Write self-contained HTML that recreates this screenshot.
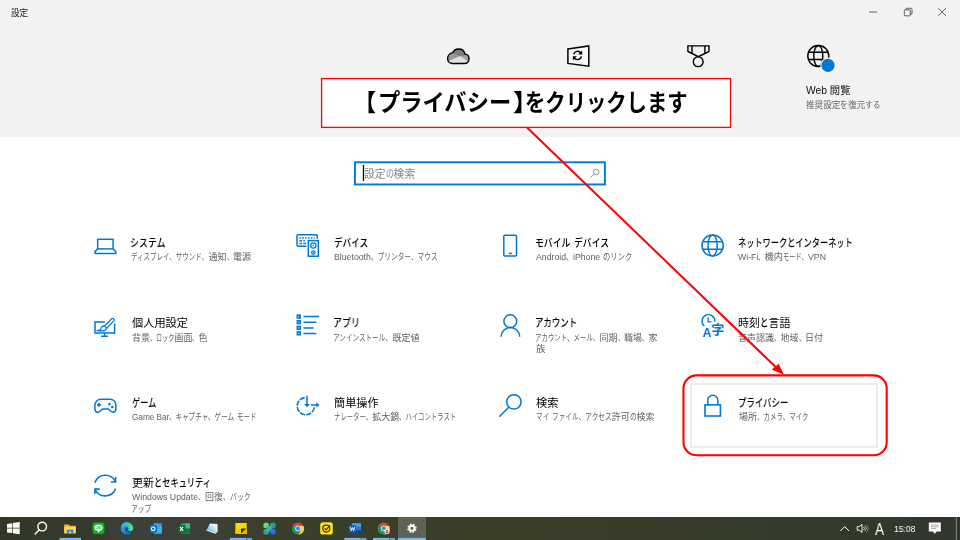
<!DOCTYPE html>
<html lang="ja">
<head>
<meta charset="utf-8">
<title>設定</title>
<style>
html,body{margin:0;padding:0}
body{width:960px;height:540px;overflow:hidden;background:#fff;position:relative;font-family:"Liberation Sans","Noto Sans CJK JP",sans-serif}
.abs{position:absolute}
.hdr{position:absolute;left:0;top:0;width:960px;height:137px;background:#f2f2f2}
.t{position:absolute;white-space:pre;will-change:transform}
.t span{position:absolute;top:0;transform-origin:0 0;white-space:pre}
svg{position:absolute;overflow:visible}
.taskbar{position:absolute;left:0;top:517px;width:960px;height:23px;background:linear-gradient(90deg,#323826 0,#353a2b 9%,#3c4038 14%,#3c4039 21%,#3a3e2c 27%,#393e29 55%,#353b2a 80%,#30362a 100%)}
</style>
</head>
<body>
<div class="hdr"></div>
<svg class="abs" style="left:0;top:0" width="960" height="540" viewBox="0 0 960 540">
 <rect x="321.6" y="78.6" width="408.9" height="48.8" fill="#fff" stroke="#f00" stroke-width="1.3"/>
 <rect x="354.95" y="162.3" width="249.95" height="22.15" fill="#fff" stroke="#0078d7" stroke-width="1.9"/>
 <rect x="690.85" y="383.95" width="186.1" height="63" fill="#fff" stroke="#e9e9e9" stroke-width="1.7"/>
</svg>
<svg class="abs" style="left:0;top:0" width="960" height="540" viewBox="0 0 960 540" fill="none" stroke-linecap="butt">
<!-- window controls -->
<g stroke="#2a2a2a" stroke-width="0.7">
 <line x1="869" y1="12.05" x2="877.2" y2="12.05"/>
 <rect x="904.3" y="9.8" width="6" height="6" rx="0.8"/>
 <path d="M906 9.8 V8.9 Q906 8.3 906.7 8.3 H911.3 Q912 8.3 912 9 V13.6 Q912 14.2 911.3 14.2 H910.3"/>
 <path d="M938.2 8.1 L946 15.9 M946 8.1 L938.2 15.9"/>
</g>
<!-- header: cloud -->
<defs>
 <clipPath id="cc"><path d="M452.6 63.5 C449.5 63.5 447.6 61.1 447.6 58.4 C447.6 55.4 449.8 53.2 452.5 52.9 C453.7 50.5 455.9 49 458.6 49 C461.9 49 464.2 51.1 465 53.9 C467.4 54.3 469 56.2 469 58.7 C469 61.5 467 63.5 464.4 63.5 Z"/></clipPath>
</defs>
<g clip-path="url(#cc)" stroke="none">
 <rect x="446" y="48" width="25" height="17" fill="#a3a3a3"/>
 <path d="M446 48 H471 V54 L459 57 L450 52 Z" fill="#7d7d7d"/>
 <path d="M446 52 L450 51.5 L460 56.2 L449 61 L446 62 Z" fill="#999"/>
 <path d="M448 61.5 L460 56 L468 61.5 L468 65 L448 65 Z" fill="#e2e2e2"/>
</g>
<path d="M452.6 63.5 C449.5 63.5 447.6 61.1 447.6 58.4 C447.6 55.4 449.8 53.2 452.5 52.9 C453.7 50.5 455.9 49 458.6 49 C461.9 49 464.2 51.1 465 53.9 C467.4 54.3 469 56.2 469 58.7 C469 61.5 467 63.5 464.4 63.5 Z" stroke="#000" stroke-width="1.4"/>
<!-- header: sync -->
<path d="M567.9 48.9 L588.8 45.9 V66.2 L567.9 63.4 Z" fill="#f9f9f9" stroke="#000" stroke-width="1.5" stroke-linejoin="miter"/>
<g stroke="#000" stroke-width="1.4">
 <path d="M573.7 54.4 A4 4 0 0 1 581 53.2"/>
 <path d="M581.4 56.3 A4 4 0 0 1 574 57.6"/>
</g>
<path d="M582.2 50.6 V54.6 H578.2 Z M572.8 60.2 V56.2 H576.8 Z" fill="#000" stroke="none"/>
<!-- header: medal -->
<g stroke="#000" stroke-width="1.4" stroke-linejoin="miter">
 <path d="M687.9 45.9 H709 V51.5 L698.4 56.6 L687.9 51.5 Z"/>
 <path d="M692 45.9 V53.2 M704.9 45.9 V53.2"/>
 <circle cx="698.2" cy="61.7" r="4.9"/>
</g>
<!-- header: globe -->
<g stroke="#000" stroke-width="1.4">
 <circle cx="818.3" cy="56" r="10.5"/>
 <ellipse cx="818.3" cy="56" rx="4.5" ry="10.5"/>
 <path d="M808.7 52.3 H828 M808.7 59.5 H828"/>
</g>
<circle cx="828" cy="65.4" r="7.8" fill="#f2f2f2" stroke="none"/>
<circle cx="828" cy="65.4" r="6.6" fill="#0078d7" stroke="none"/>
<!-- search magnifier -->
<g stroke="#7a7a7a" stroke-width="0.8">
 <circle cx="596.2" cy="172" r="2.8"/>
 <path d="M594.1 174.2 L590.3 177.6"/>
</g>
<line x1="363.45" y1="165" x2="363.45" y2="180.9" stroke="#000" stroke-width="1.3"/>

<!-- GRID ICONS -->
<g stroke="#0078d7" stroke-width="1.5">
 <!-- system -->
 <rect x="97.7" y="239.3" width="15.4" height="9.6"/>
 <path d="M97.7 248.9 L95 251.6 V253.5 H115.9 V251.6 L113.1 248.9" stroke-linejoin="round"/>
 <!-- devices -->
 <path d="M306.4 246.2 H298.2 Q297 246.2 297 245 V236 Q297 234.8 298.2 234.8 H316.1 Q317.3 234.8 317.3 236 V238.8"/>
 <rect x="308.3" y="240.6" width="10" height="15.6"/>
 <circle cx="313.3" cy="245.5" r="2.6" stroke-width="1.3"/>
 <circle cx="313.3" cy="252.6" r="1.7" stroke-width="1.3"/>
 <path d="M299.4 238 H314.8" stroke-dasharray="1.6 1.25"/>
 <path d="M299.4 240.8 H302 M303.3 240.8 H304.9 M299.4 243.6 H302 M303.3 243.6 H306.2"/>
 <!-- phone -->
 <rect x="503.8" y="235.2" width="12.7" height="20.9" rx="1"/>
 <path d="M508.7 253.4 H511.8"/>
 <!-- network globe -->
 <circle cx="712.6" cy="245.5" r="10.6"/>
 <ellipse cx="712.6" cy="245.5" rx="4.6" ry="10.6"/>
 <path d="M702.8 241.8 H722.4 M702.8 249.3 H722.4"/>
 <!-- personalization -->
 <path d="M104.8 322 H95 V333 H114.6 V323.4"/>
 <path d="M104.6 333 V336.2 M101.1 336.3 H108"/>
 <path d="M111.8 318.8 L104.6 326 L106.7 328.1 L113.9 320.9 A1.5 1.5 0 0 0 111.8 318.8 Z" stroke-width="1.3" stroke-linejoin="round"/>
 <path d="M104.6 326 C102.2 325.8 100.9 327.3 100.9 328.8 C100.9 330 99.6 330.6 97 330.6 C101 331.2 105 330.9 106.1 329.3 C106.7 328.4 106.7 328.1 106.7 328.1" stroke-width="1.3" stroke-linejoin="round"/>
 <!-- apps -->
 <path d="M303.4 316.6 H319 M303.4 322.2 H316.4 M303.4 327.9 H313.6 M303.4 333.4 H316.4"/>
 <g stroke-width="1.7">
 <rect x="297.4" y="315.2" width="2.7" height="2.7"/>
 <rect x="297.4" y="320.8" width="2.7" height="2.7"/>
 <rect x="297.4" y="326.5" width="2.7" height="2.7"/>
 <rect x="297.4" y="332" width="2.7" height="2.7"/>
 </g>
 <!-- accounts -->
 <circle cx="510.3" cy="321.2" r="6.4"/>
 <path d="M501.1 336.8 A9.3 9.3 0 0 1 519.7 336.8"/>
 <!-- time & language -->
 <path d="M704.3 326 A6.4 6.4 0 1 1 714.8 321.6" stroke-width="1.4"/>
 <path d="M708.2 317.4 V321.9 H711.5" stroke-width="1.3"/>
 <!-- gaming -->
 <path d="M101.2 399.2 H109.8 C113.6 399.2 115.9 402 115.9 405.6 V408.8 C115.9 411 114.6 412.2 113 412.2 C111.7 412.2 111 411.6 110.2 410.8 L108.4 409.1 H102.4 L100.6 410.8 C99.8 411.6 99.1 412.2 97.8 412.2 C96.2 412.2 94.9 411 94.9 408.8 V405.6 C94.9 402 97.4 399.2 101.2 399.2 Z" stroke-linejoin="round"/>
 <path d="M97.1 404.9 H100.9 M99 403 V406.8" stroke-width="1.6"/>
 <!-- ease of access -->
 <path d="M304.6 397.6 A8.6 8.6 0 1 0 314.4 406.8" stroke-width="1.6" stroke-dasharray="5.4 1.1"/>
 <path d="M307 395.8 V404.5 M311 405 H316.8"/>
 <!-- search -->
 <circle cx="513.9" cy="401.9" r="7.2"/>
 <path d="M508.7 407.2 L499.7 416.2" stroke-linecap="round"/>
 <!-- privacy -->
 <rect x="705" y="404.9" width="15.4" height="11.1" stroke-width="1.6"/>
 <path d="M707.8 404.9 V400.3 A5 5 0 0 1 717.8 400.3 V404.9"/>
 <!-- update -->
 <path d="M94.9 482.7 A11 11 0 0 1 115.3 481.6 M110.8 482 H115.6 V477" stroke-width="1.6"/>
 <path d="M115.5 488.4 A11 11 0 0 1 95.1 489.5 M99.7 489.1 H94.9 V494" stroke-width="1.6"/>
</g>
<g fill="#0078d7" stroke="none">
 <circle cx="313.3" cy="245.5" r=".8"/><circle cx="313.3" cy="252.6" r=".7"/>
 <circle cx="109.4" cy="404.3" r="1.3"/><circle cx="112.3" cy="407" r="1.3"/>
 <path d="M304 404 H310 L307 407.2 Z"/>
 <path d="M316.4 402.2 V407.8 L319.4 405 Z"/>
 <text x="702.6" y="336.7" font-family="'Liberation Sans','Noto Sans CJK JP',sans-serif" font-size="13.2" font-weight="700" textLength="8.8" lengthAdjust="spacingAndGlyphs">A</text>
 <text x="711.2" y="333.8" font-family="'Liberation Sans','Noto Sans CJK JP',sans-serif" font-size="13" font-weight="700">字</text>
</g>
</svg>

<div class="taskbar">
<div class="abs" style="left:398px;top:0;width:28px;height:23px;background:#5e6255"></div>
<svg class="abs" style="left:0;top:-517px" width="960" height="540" viewBox="0 0 960 540">
<!-- running underlines -->
<g fill="#76b9ed">
 <rect x="59.5" y="537.9" width="21.5" height="2.1"/>
 <rect x="230" y="537.9" width="16.4" height="2.1"/>
 <rect x="246.8" y="537.9" width="5.2" height="2.1" fill="#6a9fca"/>
 <rect x="344.4" y="537.9" width="16.4" height="2.1"/>
 <rect x="361.2" y="537.9" width="5.2" height="2.1" fill="#6a9fca"/>
 <rect x="373" y="537.9" width="16.4" height="2.1"/>
 <rect x="389.8" y="537.9" width="5.2" height="2.1" fill="#6a9fca"/>
 <rect x="398" y="537.9" width="28" height="2.1"/>
</g>
<!-- start -->
<g fill="#fff">
 <path d="M7 523.9 L12.2 523.2 V527.8 H7 Z M12.9 523.1 L19.7 522.1 V527.8 H12.9 Z M7 528.5 H12.2 V533.1 L7 532.4 Z M12.9 528.5 H19.7 V534.2 L12.9 533.2 Z"/>
</g>
<!-- search -->
<g fill="none" stroke="#fff" stroke-width="1.4">
 <circle cx="42.2" cy="526.6" r="4.3"/>
 <path d="M39.2 529.8 L35.2 534" stroke-linecap="round"/>
</g>
<!-- explorer -->
<path d="M64.2 524.6 H68.6 L69.6 525.8 H75.8 V533.3 H64.2 Z" fill="#f7b928"/>
<path d="M64.2 527 H75.8 V533.3 H64.2 Z" fill="#fbd463"/>
<path d="M66.8 529.8 H73.2 V533.3 H71.4 V531.6 H68.6 V533.3 H66.8 Z" fill="#2f83d8"/>
<!-- LINE -->
<rect x="92.6" y="522.5" width="11.8" height="11.6" rx="2.4" fill="#06b816"/>
<ellipse cx="98.5" cy="527.7" rx="4.1" ry="3.3" fill="#fff"/>
<path d="M97.2 530.4 L98.4 532.8 L100.6 530.2 Z" fill="#fff"/>
<text x="95.6" y="529" font-family="'Liberation Sans',sans-serif" font-size="3.2" font-weight="700" fill="#06b816" textLength="5.8" lengthAdjust="spacingAndGlyphs">LINE</text>
<!-- edge -->
<defs>
 <linearGradient id="eg" x1="0" y1="0" x2="1" y2="1"><stop offset="0" stop-color="#35c1f1"/><stop offset=".45" stop-color="#1b8fd6"/><stop offset="1" stop-color="#0c59a4"/></linearGradient>
 <linearGradient id="eg2" x1="0" y1="0" x2="1" y2="0"><stop offset="0" stop-color="#2fb5e8"/><stop offset=".55" stop-color="#35c6c0"/><stop offset="1" stop-color="#6fe04f"/></linearGradient>
</defs>
<circle cx="127" cy="528.4" r="6.3" fill="url(#eg)"/>
<path d="M121 527 A6.3 6.3 0 0 1 133.3 528.6 C133.3 530.2 132 531 130.4 531 C128.6 531 127.8 530.2 128.2 529.2 C128.8 527.4 127.4 526 125.6 526 C123.6 526 121.8 526.6 121 527 Z" fill="url(#eg2)"/>
<path d="M126.9 527.3 C127.9 527.5 128.5 528.4 128.1 529.3 C127.7 530.3 128.6 531.1 130.4 531.1 C131.4 531.1 132.3 530.8 132.9 530.2 L133.4 531.4 L131 531.6 C129 533 126.6 532.6 125.6 531 C124.8 529.6 125.4 527.6 126.9 527.3 Z" fill="#0b55a3"/>
<circle cx="126.8" cy="528.7" r="1.2" fill="#3c4038"/>
<path d="M130.2 531.2 C131.4 531.2 132.4 530.9 133.1 530.2 L133.6 532 Z" fill="#3c4038"/>
<!-- outlook -->
<rect x="153.6" y="523.2" width="8.2" height="9.6" rx=".7" fill="#28a8ea"/>
<path d="M153.6 528 H161.8 V532.8 Q161.8 533.6 161 533.6 H154.4 Q153.6 533.6 153.6 532.8 Z" fill="#1490df"/>
<path d="M157.6 528.4 L161.8 526.2 V533 Q161.8 533.8 161 533.8 H153.8 Z" fill="#50d9ff" opacity=".55"/>
<rect x="149.5" y="525.2" width="7.4" height="7.2" rx=".8" fill="#0f6cbd"/>
<circle cx="153.2" cy="528.8" r="1.8" fill="none" stroke="#fff" stroke-width="1.1"/>
<!-- excel -->
<rect x="181.2" y="523.2" width="8.8" height="10.6" rx=".8" fill="#21a366"/>
<path d="M185.6 523.2 H189.2 Q190 523.2 190 524 V528.5 H185.6 Z" fill="#33c481"/>
<path d="M181.2 528.5 H190 V533 Q190 533.8 189.2 533.8 H182 Q181.2 533.8 181.2 533 Z" fill="#107c41"/>
<rect x="177.9" y="525.2" width="7.4" height="7.2" rx=".8" fill="#0e6b38"/>
<path d="M180.1 526.8 L183.1 530.8 M183.1 526.8 L180.1 530.8" stroke="#fff" stroke-width="1.1"/>
<!-- notepad -->
<defs><linearGradient id="ng" x1="0" y1="1" x2="1" y2="0"><stop offset="0" stop-color="#2f9fbd"/><stop offset=".45" stop-color="#a9d9ea"/><stop offset=".75" stop-color="#eef8fc"/><stop offset="1" stop-color="#cfe9f3"/></linearGradient></defs>
<path d="M210 523.4 L217.5 524 L217.9 531.8 L215.4 533.8 L206.3 530.6 Z" fill="url(#ng)"/>
<path d="M217.2 524 L217.8 524 L218 531.8 L215.4 533.8 L215.2 533.2 L217.3 531.4 Z" fill="#e3a008"/>
<path d="M206.3 530.6 L215.4 533.8 L215.2 532.6 L207 529.8 Z" fill="#d9dfe2"/>
<!-- sticky notes -->
<rect x="235.4" y="523" width="11.3" height="10.8" fill="#ffd800"/>
<rect x="235.4" y="529" width="11.3" height="4.8" fill="#f8c400" opacity=".7"/>
<path d="M241 528.6 H246.4 L241 533.5 Z" fill="#2c2c48"/>
<path d="M246.7 528.6 V533.8 H241 Z" fill="#f4ae00"/>
<!-- clover -->
<path d="M263.4 524.6 Q263.4 522.7 265.3 522.7 H267 Q268.9 522.7 268.9 524.6 V528.2 H265.3 Q263.4 528.2 263.4 526.4 Z" fill="#6fd57c"/>
<path d="M270 524.6 Q270 522.7 271.9 522.7 H273.8 Q275.7 522.7 275.7 524.6 V526.3 Q275.7 528.2 273.8 528.2 H270 Z" fill="#2f9c93"/>
<path d="M263.4 530.9 Q263.4 529 265.3 529 H268.9 V532.7 Q268.9 534.6 267 534.6 H265.3 Q263.4 534.6 263.4 532.7 Z" fill="#2aa39a"/>
<rect x="266.6" y="526" width="5.4" height="5.4" rx=".8" fill="#3bb59c"/>
<circle cx="272.9" cy="531.4" r="2.9" fill="#1a73e8"/>
<!-- chrome 1 -->
<g>
 <circle cx="298.1" cy="528.4" r="6" fill="#db4437"/>
 <path d="M298.1 528.4 L292.9 525.4 A6 6 0 0 0 298.9 534.35 L301.2 529.6 Z" fill="#0f9d58"/>
 <path d="M298.1 528.4 L304.1 528.4 A6 6 0 0 1 298.6 534.38 L301.4 529.4 Z" fill="#ffcd40"/>
 <path d="M303.6 526 H298.1 V528.4 L301.2 530.3 L298.7 534.38 A6 6 0 0 0 303.6 526 Z" fill="#ffcd40"/>
 <circle cx="298.1" cy="528.4" r="2.9" fill="#f1f1f1"/>
 <circle cx="298.1" cy="528.4" r="2.2" fill="#4285f4"/>
</g>
<!-- norton -->
<rect x="320.2" y="522.2" width="12.6" height="12.4" rx="2.6" fill="#ffe01a"/>
<circle cx="326.3" cy="528.6" r="3.5" fill="none" stroke="#3a3400" stroke-width="1.2"/>
<path d="M324.6 528.2 L326.2 529.8 L329.6 525.6" fill="none" stroke="#3a3400" stroke-width="1.2"/>
<!-- word -->
<rect x="352.2" y="523.2" width="8.8" height="10.6" rx=".8" fill="#2b7cd3"/>
<path d="M352.2 523.2 H360.2 Q361 523.2 361 524 V526.6 H352.2 Z" fill="#41a5ee"/>
<path d="M352.2 530.2 H361 V533 Q361 533.8 360.2 533.8 H353 Q352.2 533.8 352.2 533 Z" fill="#103f91"/>
<rect x="348.8" y="525.2" width="7.4" height="7.2" rx=".8" fill="#185abd"/>
<path d="M350.2 526.9 L351.3 530.7 L352.5 527.6 L353.7 530.7 L354.8 526.9" fill="none" stroke="#fff" stroke-width=".9" stroke-linejoin="round"/>
<!-- chrome 2 -->
<g>
 <circle cx="383.8" cy="528.4" r="6" fill="#db4437"/>
 <path d="M383.8 528.4 L378.6 525.4 A6 6 0 0 0 384.6 534.35 L386.9 529.6 Z" fill="#0f9d58"/>
 <path d="M389.3 526 H383.8 V528.4 L386.9 530.3 L384.4 534.38 A6 6 0 0 0 389.3 526 Z" fill="#ffcd40"/>
 <circle cx="383.8" cy="528.4" r="2.9" fill="#f1f1f1"/>
 <circle cx="383.8" cy="528.4" r="2.2" fill="#4285f4"/>
 <circle cx="387" cy="531.4" r="2.6" fill="#eee"/>
 <path d="M385.4 531.6 H388.6 L388.2 533.2 H385.8 Z" fill="#c0392b"/>
 <path d="M385.6 530.8 L387 529.6 L388.4 530.8 Z" fill="#2c3e50"/>
</g>
<!-- settings gear -->
<g fill="none" stroke="#fff">
 <circle cx="411.9" cy="528.3" r="4" stroke-width="1.4" stroke-dasharray="1.62 1.52" stroke-dashoffset="2.37"/>
 <circle cx="411.9" cy="528.3" r="2.55" stroke-width="2"/>
</g>
<!-- tray -->
<g fill="none" stroke="#fff" stroke-width="1">
 <path d="M840.4 531 L844.7 526.6 L849 531"/>
 <path d="M857.2 526.6 H859.2 L862 524.4 V532.4 L859.2 530.2 H857.2 Z" stroke-width=".9"/>
 <path d="M863.6 526.9 A2 2 0 0 1 863.6 529.9" stroke-width=".8"/>
 <path d="M865 525.6 A4 4 0 0 1 865 531.2" stroke-width=".8" opacity=".75"/>
 <path d="M866.5 524.4 A6 6 0 0 1 866.5 532.4" stroke-width=".8" opacity=".45"/>
</g>
<path d="M928.8 522.6 H940.8 V531.6 H936.8 L934.8 533.8 L932.8 531.6 H928.8 Z" fill="#fff"/>
<path d="M931 525 H938.6 M931 526.8 H938.6 M931 528.6 H936.4" stroke="#8a8c84" stroke-width=".7"/>
<rect x="955.8" y="517" width="1" height="23" fill="#8a8c84"/>
</svg>

</div>
<div class="t" style="left:131px;top:235.10px;font-size:11.0px;line-height:16px;height:16px;color:#000;font-weight:500;"><span style="left:-0.81px;transform:scaleX(0.8140)">システム</span></div>
<div class="t" style="left:131px;top:250.40px;font-size:9.0px;line-height:14px;height:14px;color:#5f5f5f;"><span style="left:0.00px;transform:scaleX(0.7213)">ディスプレイ、サウンド、</span><span style="left:77.51px;transform:scaleX(1.0000)">通知</span><span style="left:95.51px;transform:scaleX(0.7213)">、</span><span style="left:102.00px;transform:scaleX(1.0000)">電源</span></div>
<div class="t" style="left:334px;top:235.10px;font-size:11.0px;line-height:16px;height:16px;color:#000;font-weight:500;"><span style="left:0.00px;transform:scaleX(0.7791)">デバイス</span></div>
<div class="t" style="left:334px;top:250.40px;font-size:9.0px;line-height:14px;height:14px;color:#5f5f5f;"><span style="left:0.00px;transform:scaleX(0.9700)">Bluetooth</span><span style="left:36.89px;transform:scaleX(0.7409)">、プリンター、マウス</span></div>
<div class="t" style="left:536px;top:235.10px;font-size:11.0px;line-height:16px;height:16px;color:#000;font-weight:500;"><span style="left:-0.80px;transform:scaleX(0.8017)">モバイル</span><span style="left:34.47px;transform:scaleX(1.0000);font-weight:400"> </span><span style="left:37.53px;transform:scaleX(0.8017)">デバイス</span></div>
<div class="t" style="left:536px;top:250.40px;font-size:9.0px;line-height:14px;height:14px;color:#5f5f5f;"><span style="left:0.00px;transform:scaleX(0.9700)">Android</span><span style="left:30.09px;transform:scaleX(0.8137)">、</span><span style="left:37.41px;transform:scaleX(0.9700)">iPhone </span><span style="left:67.02px;transform:scaleX(0.8137)">のリンク</span></div>
<div class="t" style="left:738px;top:235.10px;font-size:11.0px;line-height:16px;height:16px;color:#000;font-weight:500;"><span style="left:0.00px;transform:scaleX(0.7451)">ネットワークとインターネット</span></div>
<div class="t" style="left:738px;top:250.40px;font-size:9.0px;line-height:14px;height:14px;color:#5f5f5f;"><span style="left:0.00px;transform:scaleX(0.9700)">Wi-Fi</span><span style="left:20.36px;transform:scaleX(0.6984)">、</span><span style="left:26.64px;transform:scaleX(1.0000)">機内</span><span style="left:44.64px;transform:scaleX(0.6984)">モード、</span><span style="left:69.53px;transform:scaleX(0.9700)">VPN</span></div>
<div class="t" style="left:131.5px;top:315.10px;font-size:11.0px;line-height:16px;height:16px;color:#000;font-weight:500;"><span style="left:0.00px;transform:scaleX(1.0182);font-weight:400">個人用設定</span></div>
<div class="t" style="left:131.5px;top:330.90px;font-size:9.0px;line-height:14px;height:14px;color:#5f5f5f;"><span style="left:0.00px;transform:scaleX(1.0000)">背景</span><span style="left:18.00px;transform:scaleX(0.6778)">、ロック</span><span style="left:42.40px;transform:scaleX(1.0000)">画面</span><span style="left:60.40px;transform:scaleX(0.6778)">、</span><span style="left:66.50px;transform:scaleX(1.0000)">色</span></div>
<div class="t" style="left:334px;top:315.10px;font-size:11.0px;line-height:16px;height:16px;color:#000;font-weight:500;"><span style="left:-0.82px;transform:scaleX(0.8167)">アプリ</span></div>
<div class="t" style="left:334px;top:330.90px;font-size:9.0px;line-height:14px;height:14px;color:#5f5f5f;"><span style="left:-0.73px;transform:scaleX(0.7312)">アンインストール、</span><span style="left:58.50px;transform:scaleX(1.0000)">既定値</span></div>
<div class="t" style="left:536px;top:315.10px;font-size:11.0px;line-height:16px;height:16px;color:#000;font-weight:500;"><span style="left:-0.76px;transform:scaleX(0.7642)">アカウント</span></div>
<div class="t" style="left:536px;top:330.90px;font-size:9.0px;line-height:14px;height:14px;color:#5f5f5f;"><span style="left:-0.72px;transform:scaleX(0.7162)">アカウント、メール、</span><span style="left:63.61px;transform:scaleX(1.0000)">同期</span><span style="left:81.61px;transform:scaleX(0.7162)">、</span><span style="left:88.05px;transform:scaleX(1.0000)">職場</span><span style="left:106.05px;transform:scaleX(0.7162)">、</span><span style="left:112.50px;transform:scaleX(1.0000)">家</span></div>
<div class="t" style="left:536px;top:342.40px;font-size:9.0px;line-height:14px;height:14px;color:#5f5f5f;"><span style="left:0.00px;transform:scaleX(1.0556)">族</span></div>
<div class="t" style="left:738px;top:315.10px;font-size:11.0px;line-height:16px;height:16px;color:#000;font-weight:500;"><span style="left:0.00px;transform:scaleX(1.0000);font-weight:400">時刻</span><span style="left:22.00px;transform:scaleX(0.7728)">と</span><span style="left:30.50px;transform:scaleX(1.0000);font-weight:400">言語</span></div>
<div class="t" style="left:738px;top:330.90px;font-size:9.0px;line-height:14px;height:14px;color:#5f5f5f;"><span style="left:0.00px;transform:scaleX(1.0000)">音声認識</span><span style="left:36.00px;transform:scaleX(0.7222)">、</span><span style="left:42.50px;transform:scaleX(1.0000)">地域</span><span style="left:60.50px;transform:scaleX(0.7222)">、</span><span style="left:67.00px;transform:scaleX(1.0000)">日付</span></div>
<div class="t" style="left:131.5px;top:395.10px;font-size:11.0px;line-height:16px;height:16px;color:#000;font-weight:500;"><span style="left:0.00px;transform:scaleX(0.7424)">ゲーム</span></div>
<div class="t" style="left:131.5px;top:410.40px;font-size:9.0px;line-height:14px;height:14px;color:#5f5f5f;"><span style="left:0.00px;transform:scaleX(0.9100)">Game Bar</span><span style="left:37.32px;transform:scaleX(0.7268)">、キャプチャ、ゲーム</span><span style="left:102.60px;transform:scaleX(1.0000)"> </span><span style="left:105.10px;transform:scaleX(0.7268)">モード</span></div>
<div class="t" style="left:334px;top:395.10px;font-size:11.0px;line-height:16px;height:16px;color:#000;font-weight:500;"><span style="left:0.00px;transform:scaleX(1.0114);font-weight:400">簡単操作</span></div>
<div class="t" style="left:334px;top:410.40px;font-size:9.0px;line-height:14px;height:14px;color:#5f5f5f;"><span style="left:0.00px;transform:scaleX(0.7094)">ナレーター、</span><span style="left:38.25px;transform:scaleX(1.0000)">拡大鏡</span><span style="left:65.25px;transform:scaleX(0.7094)">、ハイコントラスト</span></div>
<div class="t" style="left:536px;top:395.10px;font-size:11.0px;line-height:16px;height:16px;color:#000;font-weight:500;"><span style="left:0.00px;transform:scaleX(1.0227);font-weight:400">検索</span></div>
<div class="t" style="left:536px;top:410.40px;font-size:9.0px;line-height:14px;height:14px;color:#5f5f5f;"><span style="left:0.00px;transform:scaleX(0.7407)">マイ</span><span style="left:13.33px;transform:scaleX(1.0000)"> </span><span style="left:15.83px;transform:scaleX(0.7407)">ファイル、アクセス</span><span style="left:75.83px;transform:scaleX(1.0000)">許可</span><span style="left:93.83px;transform:scaleX(0.7407)">の</span><span style="left:100.50px;transform:scaleX(1.0000)">検索</span></div>
<div class="t" style="left:739px;top:395.10px;font-size:11.0px;line-height:16px;height:16px;color:#000;font-weight:500;"><span style="left:-0.77px;transform:scaleX(0.7656)">プライバシー</span></div>
<div class="t" style="left:739px;top:410.40px;font-size:9.0px;line-height:14px;height:14px;color:#5f5f5f;"><span style="left:0.00px;transform:scaleX(1.0000)">場所</span><span style="left:18.00px;transform:scaleX(0.7201)">、カメラ、マイク</span></div>
<div class="t" style="left:131.5px;top:475.10px;font-size:11.0px;line-height:16px;height:16px;color:#000;font-weight:500;"><span style="left:0.00px;transform:scaleX(1.0000);font-weight:400">更新</span><span style="left:22.00px;transform:scaleX(0.7467)">とセキュリティ</span></div>
<div class="t" style="left:131.5px;top:490.40px;font-size:9.0px;line-height:14px;height:14px;color:#5f5f5f;"><span style="left:0.00px;transform:scaleX(0.9700)">Windows Update</span><span style="left:65.99px;transform:scaleX(0.7729)">、</span><span style="left:72.95px;transform:scaleX(1.0000)">回復</span><span style="left:90.95px;transform:scaleX(0.7729)">、バック</span></div>
<div class="t" style="left:131.5px;top:501.90px;font-size:9.0px;line-height:14px;height:14px;color:#5f5f5f;"><span style="left:-0.75px;transform:scaleX(0.7500)">アップ</span></div>
<div class="t" style="left:11px;top:6.60px;font-size:8.6px;line-height:13px;height:13px;color:#222;"><span style="left:0.00px;transform:scaleX(0.9947)">設定</span></div>
<div class="t" style="left:806px;top:82.80px;font-size:10.3px;line-height:15px;height:15px;color:#111;"><span style="left:0.00px;transform:scaleX(0.9922)">Web 閲覧</span></div>
<div class="t" style="left:806px;top:99.40px;font-size:8.6px;line-height:13px;height:13px;color:#666;"><span style="left:0.00px;transform:scaleX(1.0000)">推奨設定</span><span style="left:34.38px;transform:scaleX(0.9027)">を</span><span style="left:42.13px;transform:scaleX(1.0000)">復元</span><span style="left:59.32px;transform:scaleX(0.9027)">する</span></div>
<div class="t" style="left:363.9px;top:165.80px;font-size:10.8px;line-height:16px;height:16px;color:#858585;"><span style="left:0.00px;transform:scaleX(1.0000)">設定</span><span style="left:21.59px;transform:scaleX(0.7419)">の</span><span style="left:29.60px;transform:scaleX(1.0000)">検索</span></div>
<div class="t" style="left:367.8px;top:86.10px;font-size:23.5px;line-height:35px;height:35px;color:#000;font-weight:700;"><span style="left:-14.06px;transform:scaleX(0.9375)">【</span><span style="left:10.30px;transform:scaleX(0.9476)">プライバシー</span><span style="left:145.00px;transform:scaleX(1.0500)">】</span><span style="left:157.24px;transform:scaleX(0.8647)">をクリックします</span></div>
<div class="t" style="left:893.6px;top:522.00px;font-size:9px;line-height:14px;height:14px;color:#fff;"><span style="left:0.00px;transform:scaleX(0.9504)">15:08</span></div>
<div class="t" style="left:875.4px;top:518.20px;font-size:15.6px;line-height:23px;height:23px;color:#fff;"><span style="left:0.00px;transform:scaleX(0.8636)">A</span></div>
<svg class="abs" style="left:0;top:0" width="960" height="540" viewBox="0 0 960 540">
 <rect x="683.5" y="375.4" width="203.2" height="79.9" rx="13" ry="13" fill="none" stroke="#f00" stroke-width="2.1"/>
 <line x1="527" y1="127.5" x2="776" y2="367.3" stroke="#f00" stroke-width="2"/>
 <polygon points="783.9,374.8 771.8,369.5 778.7,363.8" fill="#f00"/>
</svg>
</body>
</html>
